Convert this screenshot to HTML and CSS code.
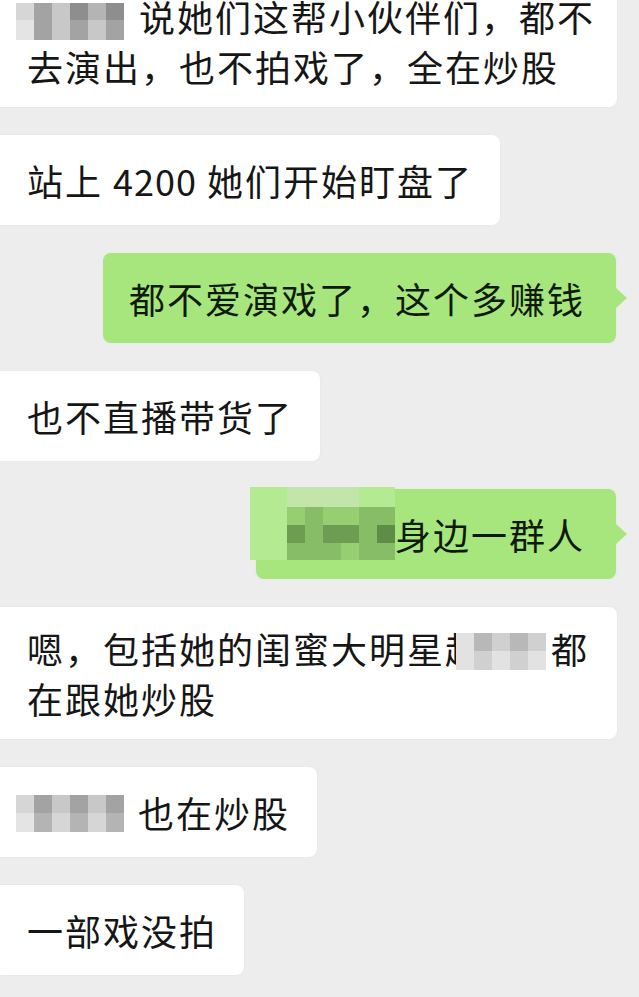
FILE: index.html
```html
<!DOCTYPE html>
<html lang="zh-CN">
<head>
<meta charset="utf-8">
<title>聊天记录</title>
<link rel="stylesheet" href="styles.css">
</head>
<body>
<div class="chat">
  <div class="row in first">
    <div class="bubble wide"><div class="txt"><span class="mask m1"><span class="mosaic"><i class="c1"></i><i class="c4"></i><i class="c2"></i><i class="c5"></i><i class="c3"></i><i class="c5"></i><i class="c0"></i><i class="c4"></i><i class="c2"></i><i class="c4"></i><i class="c2"></i><i class="c4"></i></span></span>说她们这帮小伙伴们，都不<br>去演出，也不拍戏了，全在炒股</div></div>
  </div>
  <div class="row in">
    <div class="bubble"><div class="txt">站上 <span class="num">4200</span> 她们开始盯盘了</div></div>
  </div>
  <div class="row out">
    <div class="bubble green"><div class="txt">都不爱演戏了，这个多赚钱</div></div>
  </div>
  <div class="row in">
    <div class="bubble"><div class="txt">也不直播带货了</div></div>
  </div>
  <div class="row out">
    <div class="bubble green"><div class="txt"><span class="mask m5"><span class="mosaic"><i class="p0"></i><i class="p1"></i><i class="p1"></i><i class="p1"></i><i class="p1"></i><i class="p0"></i><i class="p0"></i><i class="p0"></i><i class="p2"></i><i class="p3"></i><i class="p2"></i><i class="p2"></i><i class="p3"></i><i class="p3"></i><i class="p0"></i><i class="p4"></i><i class="p3"></i><i class="p4"></i><i class="p4"></i><i class="p3"></i><i class="p5"></i><i class="p0"></i><i class="p3"></i><i class="p3"></i><i class="p3"></i><i class="p2"></i><i class="p3"></i><i class="p3"></i></span></span>身边一群人</div></div>
  </div>
  <div class="row in">
    <div class="bubble wide"><div class="txt">嗯，包括她的闺蜜大明星赵<span class="mask m6"><span class="mosaic"><i class="l0"></i><i class="l2"></i><i class="l1"></i><i class="l2"></i><i class="l1"></i><i class="l0"></i><i class="l1"></i><i class="l0"></i><i class="l1"></i><i class="l0"></i></span></span>都<br>在跟她炒股</div></div>
  </div>
  <div class="row in">
    <div class="bubble"><div class="txt"><span class="mask m7"><span class="mosaic"><i class="c1"></i><i class="c4"></i><i class="c2"></i><i class="c4"></i><i class="c2"></i><i class="c4"></i><i class="c0"></i><i class="c3"></i><i class="c1"></i><i class="c3"></i><i class="c1"></i><i class="c3"></i></span></span>也在炒股</div></div>
  </div>
  <div class="row in">
    <div class="bubble"><div class="txt">一部戏没拍</div></div>
  </div>
</div>
</body>
</html>
```

FILE: styles.css
```css
html, body {
  margin: 0;
  padding: 0;
}

body {
  background: #ededed;
  font-family: "Noto Sans CJK SC", "Noto Sans", sans-serif;
  overflow: hidden;
  width: 639px;
  height: 997px;
}

.chat {
  display: flex;
  flex-direction: column;
  gap: 28px;
}

.row {
  display: flex;
}

.row.first {
  margin-top: -25px;
}

.row.out {
  justify-content: flex-end;
  padding-right: 23px;
}

.bubble {
  position: relative;
  box-sizing: border-box;
  min-height: 90px;
  display: flex;
  align-items: center;
  padding: 16px 27px;
  background: #ffffff;
  border-radius: 0 8px 8px 0;
  box-shadow: 0 0 2px rgba(0, 0, 0, 0.05);
  color: #161616;
  font-size: 36px;
  line-height: 50px;
  letter-spacing: 2px;
  white-space: nowrap;
}

.num {
  letter-spacing: 1px;
}

.bubble.wide {
  width: 617px;
}

.bubble.green {
  background: #a6e67d;
  border-radius: 8px;
  padding: 16px 31px 16px 26px;
  color: #101a0a;
}

.bubble.green::after {
  content: "";
  position: absolute;
  right: -11px;
  top: 50%;
  margin-top: -10px;
  border-left: 11px solid #a6e67d;
  border-top: 10px solid transparent;
  border-bottom: 10px solid transparent;
}

/* pixelated privacy masks */
.mask {
  display: inline-block;
  position: relative;
  height: 36px;
  vertical-align: top;
}

.mosaic {
  position: absolute;
  display: grid;
  filter: blur(0.7px);
}

.mosaic i {
  display: block;
}

.m1 { width: 112px; }
.m1 .mosaic {
  left: -11px;
  top: 12px;
  grid-template-columns: repeat(6, 18px);
  grid-template-rows: 17px 20px;
}

.m7 { width: 111px; }
.m7 .mosaic {
  left: -11px;
  top: 8px;
  grid-template-columns: repeat(6, 18px);
  grid-template-rows: 18px 19px;
}

.m6 { width: 68px; }
.m6 .mosaic {
  left: -27px;
  top: 10px;
  grid-template-columns: repeat(5, 18px);
  grid-template-rows: 18px 19px;
}

.m5 { width: 113px; }
.m5 .mosaic {
  left: -32px;
  top: -22px;
  grid-template-columns: 37px repeat(6, 18px);
  grid-template-rows: 20px 18px 18px 17px;
}

.c0 { background: #e4e4e4; }
.c1 { background: #d6d6d6; }
.c2 { background: #c8c8c8; }
.c3 { background: #b4b4b4; }
.c4 { background: #a3a3a3; }
.c5 { background: #8e8e8e; }

.l0 { background: #e2e2e2; }
.l1 { background: #d0d0d0; }
.l2 { background: #b8b8b8; }

.p0 { background: #b4ea92; }
.p1 { background: #c2e6aa; }
.p2 { background: #95cf72; }
.p3 { background: #86bd66; }
.p4 { background: #6d9d52; }
.p5 { background: #5f8c47; }
```
